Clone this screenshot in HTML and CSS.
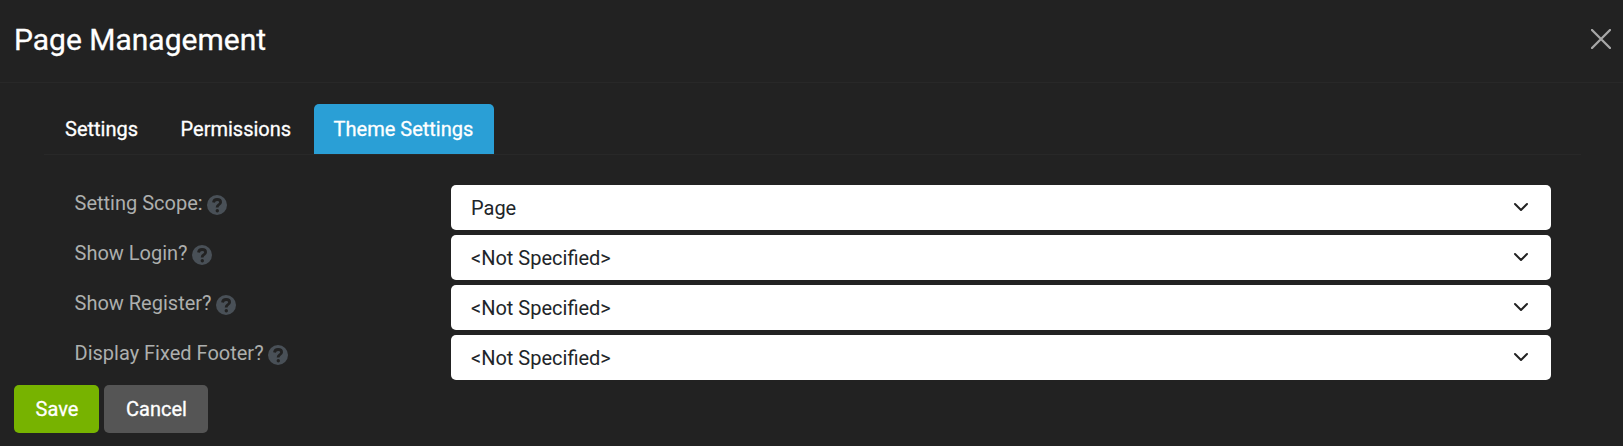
FILE: index.html
```html
<!DOCTYPE html>
<html lang="en">
<head>
<meta charset="utf-8">
<title>Page Management</title>
<link rel="stylesheet" href="styles.css">
</head>
<body>
<svg class="defs" aria-hidden="true">
  <symbol id="help" viewBox="0 0 20 20"><circle cx="10" cy="10" r="10"/><path fill="none" stroke="#222" stroke-width="2.8" d="M6.500 7.500C6.700 5.500 8 4.500 10.100 4.500c2.200 0 3.500 1.100 3.500 2.700 0 1.400-.8 2-2 2.700-1.100.7-1.500 1.300-1.500 2.700"/><circle cx="10.300" cy="15.700" r="1.700" fill="#222"/></symbol>
  <symbol id="chevron" viewBox="0 0 16 16"><path fill="none" stroke="#222" stroke-width="2" stroke-linecap="round" stroke-linejoin="round" d="m2 5 6 6 6-6"/></symbol>
</svg>
<main class="modal">
  <header class="modal-header">
    <h1 class="modal-title">Page Management</h1>
    <button class="close" aria-label="Close"><svg viewBox="0 0 20 20"><path d="M1 1 19 19M19 1 1 19"/></svg></button>
  </header>
  <section class="modal-body">
    <nav class="tabs">
      <a class="tab">Settings</a>
      <a class="tab">Permissions</a>
      <a class="tab active">Theme Settings</a>
    </nav>
    <div class="fields">
      <div class="row"><span class="label">Setting Scope: <svg class="help"><use href="#help"/></svg></span><div class="select">Page<svg class="chevron"><use href="#chevron"/></svg></div></div>
      <div class="row"><span class="label">Show Login? <svg class="help"><use href="#help"/></svg></span><div class="select">&lt;Not Specified&gt;<svg class="chevron"><use href="#chevron"/></svg></div></div>
      <div class="row"><span class="label">Show Register? <svg class="help"><use href="#help"/></svg></span><div class="select">&lt;Not Specified&gt;<svg class="chevron"><use href="#chevron"/></svg></div></div>
      <div class="row"><span class="label">Display Fixed Footer? <svg class="help"><use href="#help"/></svg></span><div class="select">&lt;Not Specified&gt;<svg class="chevron"><use href="#chevron"/></svg></div></div>
    </div>
  </section>
  <div class="actions">
    <button class="btn save">Save</button>
    <button class="btn cancel">Cancel</button>
  </div>
</main>
</body>
</html>
```
FILE: styles.css
```css
* { box-sizing: border-box; }
body { margin: 0; background: #222; color: #adafae; font: 400 20px/30px Roboto, sans-serif; overflow: hidden; }
.defs { display: none; }
.modal { height: 446px; }
.modal-header { display: flex; align-items: center; justify-content: space-between; height: 83px; padding: 0 12px 4px 14px; border-bottom: 1px solid #282828; }
.modal-title { margin: 0; padding-top: 2px; font-size: 30px; font-weight: 400; line-height: 36px; color: #fff; -webkit-text-stroke: 0.3px #fff; }
.close { display: flex; padding: 0; border: 0; background: none; }
.close svg { width: 20px; height: 20px; fill: none; stroke: #a7a7a7; stroke-width: 2.3; stroke-linecap: round; }
.modal-body { padding: 21px 42px 0 44px; }
.tabs { display: flex; gap: 2.5px; height: 51px; padding-left: 1px; border-bottom: 1px solid #282828; }
.tab { height: 50px; padding: 10px 20px; border-radius: 5px 5px 0 0; color: #fff; -webkit-text-stroke: 0.3px #fff; }
.tab.active { width: 180px; background: #2a9fd6; }
.fields { display: grid; gap: 5px; padding: 30px 30px 0 30.5px; }
.row { display: grid; grid-template-columns: 376.5px 1fr; height: 45px; }
.label { padding-top: 3px; }
.help { width: 20px; height: 20px; margin-left: -0.7px; fill: #495057; vertical-align: -5px; }
.select { display: flex; align-items: center; justify-content: space-between; padding: 0 22px 0 20px; border-radius: 5px; background: #fff; color: #212529; }
.chevron { width: 16px; height: 16px; margin-top: -1px; }
.actions { display: flex; gap: 5px; padding: 5px 14px 0; }
.btn { height: 48px; padding: 0 0 0 1px; border: 0; border-radius: 5px; color: #fff; font: 400 20px/30px Roboto, sans-serif; -webkit-text-stroke: 0.3px #fff; }
.save { width: 85px; background: #77b300; }
.cancel { width: 104px; background: #555; }
```
